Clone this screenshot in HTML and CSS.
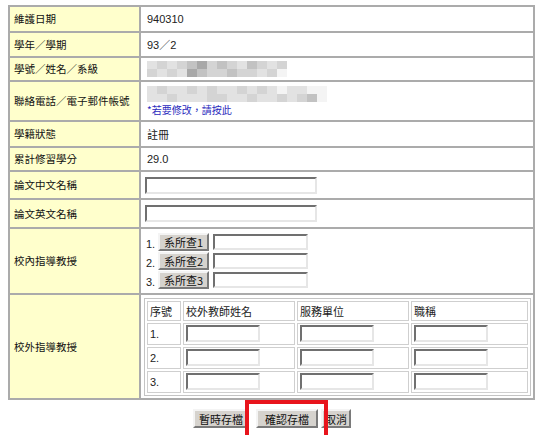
FILE: index.html
```html
<!DOCTYPE html>
<html lang="zh-Hant">
<head>
<meta charset="utf-8">
<title>論文資料</title>
<link rel="stylesheet" href="styles.css">
</head>
<body>
<div class="page">
<table class="main">
  <colgroup><col class="c-label"><col class="c-value"></colgroup>
  <tr class="r1"><th>維護日期</th><td class="num">940310</td></tr>
  <tr class="r2"><th>學年／學期</th><td class="num">93／2</td></tr>
  <tr class="r3"><th>學號／姓名／系級</th><td>
    <div class="mosaic m3">
      <i class="s1"></i><i class="s2"></i><i class="s1"></i><i class="s2"></i><i class="s3"></i><i class="s4"></i><i class="s2"></i><i class="s3"></i><i class="s2"></i><i class="s1"></i><i class="s3"></i><i class="s2"></i><i class="s1"></i><i class="s2"></i>
      <i class="s2"></i><i class="s1"></i><i class="s2"></i><i class="s1"></i><i class="s4"></i><i class="s3"></i><i class="s2"></i><i class="s2"></i><i class="s3"></i><i class="s2"></i><i class="s2"></i><i class="s1"></i><i class="s2"></i><i class="s0"></i>
    </div>
  </td></tr>
  <tr class="r4"><th>聯絡電話／電子郵件帳號</th><td>
    <div class="mosaic m4">
      <i class="s1"></i><i class="s2"></i><i class="s1"></i><i class="s1"></i><i class="s2"></i><i class="s1"></i><i class="s2"></i><i class="s1"></i><i class="s1"></i><i class="s2"></i><i class="s1"></i><i class="s2"></i><i class="s1"></i><i class="s0"></i><i class="s1"></i><i class="s1"></i><i class="s0"></i><i class="s0"></i>
      <i class="s1"></i><i class="s1"></i><i class="s2"></i><i class="s1"></i><i class="s1"></i><i class="s1"></i><i class="s2"></i><i class="s2"></i><i class="s1"></i><i class="s1"></i><i class="s2"></i><i class="s1"></i><i class="s1"></i><i class="s2"></i><i class="s1"></i><i class="s2"></i><i class="s3"></i><i class="s0"></i>
    </div>
    <a class="edit" href="#">*若要修改，請按此</a>
  </td></tr>
  <tr class="r5"><th>學籍狀態</th><td class="cjk">註冊</td></tr>
  <tr class="r6"><th>累計修習學分</th><td class="num">29.0</td></tr>
  <tr class="r7"><th>論文中文名稱</th><td><input class="title-in" type="text"></td></tr>
  <tr class="r8"><th>論文英文名稱</th><td><input class="title-in" type="text"></td></tr>
  <tr class="r9"><th>校內指導教授</th><td>
    <div class="advisor"><span class="no">1.</span><button class="btn small">系所查1</button><input class="adv-in" type="text"></div>
    <div class="advisor"><span class="no">2.</span><button class="btn small">系所查2</button><input class="adv-in" type="text"></div>
    <div class="advisor"><span class="no">3.</span><button class="btn small">系所查3</button><input class="adv-in" type="text"></div>
  </td></tr>
  <tr class="r10"><th>校外指導教授</th><td class="inner-cell">
    <table class="inner">
      <colgroup><col class="i1"><col class="i2"><col class="i3"><col class="i4"></colgroup>
      <tr class="ih"><td>序號</td><td>校外教師姓名</td><td>服務單位</td><td>職稱</td></tr>
      <tr><td class="num">1.</td><td><input class="cell-in" type="text"></td><td><input class="cell-in" type="text"></td><td><input class="cell-in" type="text"></td></tr>
      <tr><td class="num">2.</td><td><input class="cell-in" type="text"></td><td><input class="cell-in" type="text"></td><td><input class="cell-in" type="text"></td></tr>
      <tr><td class="num">3.</td><td><input class="cell-in" type="text"></td><td><input class="cell-in" type="text"></td><td><input class="cell-in" type="text"></td></tr>
    </table>
  </td></tr>
</table>
<div class="actions">
  <button class="btn b-temp">暫時存檔</button>
  <button class="btn b-confirm">確認存檔</button>
  <button class="btn b-cancel">取消</button>
  <span class="highlight"></span>
</div>
</div>
</body>
</html>
```

FILE: styles.css
```css
html, body {
  margin: 0;
  padding: 0;
  background: #ffffff;
}
body {
  font-family: "Liberation Sans", "Noto Sans CJK TC", sans-serif;
  font-size: 12px;
  color: #222;
  overflow: hidden;
}
.page {
  padding: 5px 0 0 8px;
  width: 528px;
}
.main {
  border-collapse: collapse;
  width: 527px;
  table-layout: fixed;
  border: 2px solid #a4a4a4;
}
.c-label { width: 131px; }
.main > tbody > tr > th,
.main > tbody > tr > td {
  border: 2px solid #ababab;
  padding: 0 0 0 5px;
  vertical-align: middle;
  text-align: left;
  line-height: 14px;
}
.main > tbody > tr > th {
  background: #ffffcc;
  font-weight: normal;
  padding-left: 4px;
  font-size: 10.5px;
  color: #111;
  white-space: nowrap;
  font-family: "Noto Sans CJK TC", sans-serif;
}
.main > tbody > tr > td { padding-left: 6px; }
.cjk { font-family: "Noto Sans CJK TC", sans-serif; font-size: 11px; }
.num { font-size: 11px; }
.r1 { height: 26px; }
.r2 { height: 25px; }
.r3 { height: 24px; }
.r4 { height: 40px; }
.r5 { height: 26px; }
.r6 { height: 24px; }
.r7 { height: 28px; }
.r8 { height: 29px; }
.r9 { height: 66px; }
.r10 { height: 105px; }

.mosaic {
  display: grid;
  grid-auto-rows: 8px;
}
.mosaic i { display: block; }
.m3 { grid-template-columns: repeat(14, 10px); width: 140px; }
.m4 { grid-template-columns: repeat(18, 10px); width: 180px; }
.s0 { background: #f4f4f4; }
.s1 { background: #e2e2e2; }
.s2 { background: #d4d4d4; }
.s3 { background: #c2c2c2; }
.s4 { background: #a8a8a8; }
.edit {
  display: block;
  color: #2b2bbd;
  text-decoration: none;
  font-size: 10px;
  margin-top: 1px;
  font-family: "Noto Sans CJK TC", sans-serif;
}

input {
  box-sizing: border-box;
  margin: 0;
  padding: 0;
  background: #fff;
  border: 2px solid;
  border-color: #707070 #e6e6e6 #e6e6e6 #707070;
  font-size: 11px;
  display: block;
}
.title-in { width: 172px; height: 17px; margin-left: -2px; }
.advisor {
  display: flex;
  align-items: center;
  height: 19px;
  margin-left: -1px;
}
.no { width: 12px; font-size: 11px; padding-top: 4px; }
.btn {
  font-family: "Noto Sans CJK TC", sans-serif;
  font-size: 11px;
  background: #d6d3ce;
  color: #111;
  border: 2px solid;
  border-color: #f4f4f4 #7a7a7a #7a7a7a #f4f4f4;
  padding: 0;
  margin: 0;
  line-height: 12px;
}
.small { width: 51px; height: 18px; }
.adv-in { width: 95px; height: 16px; margin-left: 4px; }

.main > tbody > tr > td.inner-cell { padding: 0 4px 0 3px; }
.inner {
  width: 387px;
  table-layout: fixed;
  border-collapse: separate;
  border-spacing: 2px;
  border: 1px solid #c4c4c4;
}
.i1 { width: 34px; }
.i2 { width: 112px; }
.i3 { width: 112px; }
.inner td {
  border: 1px solid #cfcfcf;
  padding: 0 0 0 2px;
  height: 20px;
  vertical-align: middle;
  font-family: "Noto Sans CJK TC", sans-serif;
  font-size: 11px;
  line-height: 14px;
}
.inner td.num { font-family: "Liberation Sans", sans-serif; font-size: 11px; }
.inner tr.ih td { height: 18px; }
.cell-in { width: 74px; height: 17px; }

.actions {
  position: relative;
  display: flex;
  justify-content: flex-start;
  padding: 9px 0 0 185px;
  height: 30px;
}
.b-temp { width: 56px; height: 19px; }
.b-confirm { width: 62px; height: 19px; margin-left: 7px; }
.b-cancel { width: 30px; height: 19px; margin-left: 3px; }
.highlight {
  position: absolute;
  left: 237px;
  top: 0;
  width: 75px;
  height: 40px;
  border: 4px solid #e8141c;
}
```
